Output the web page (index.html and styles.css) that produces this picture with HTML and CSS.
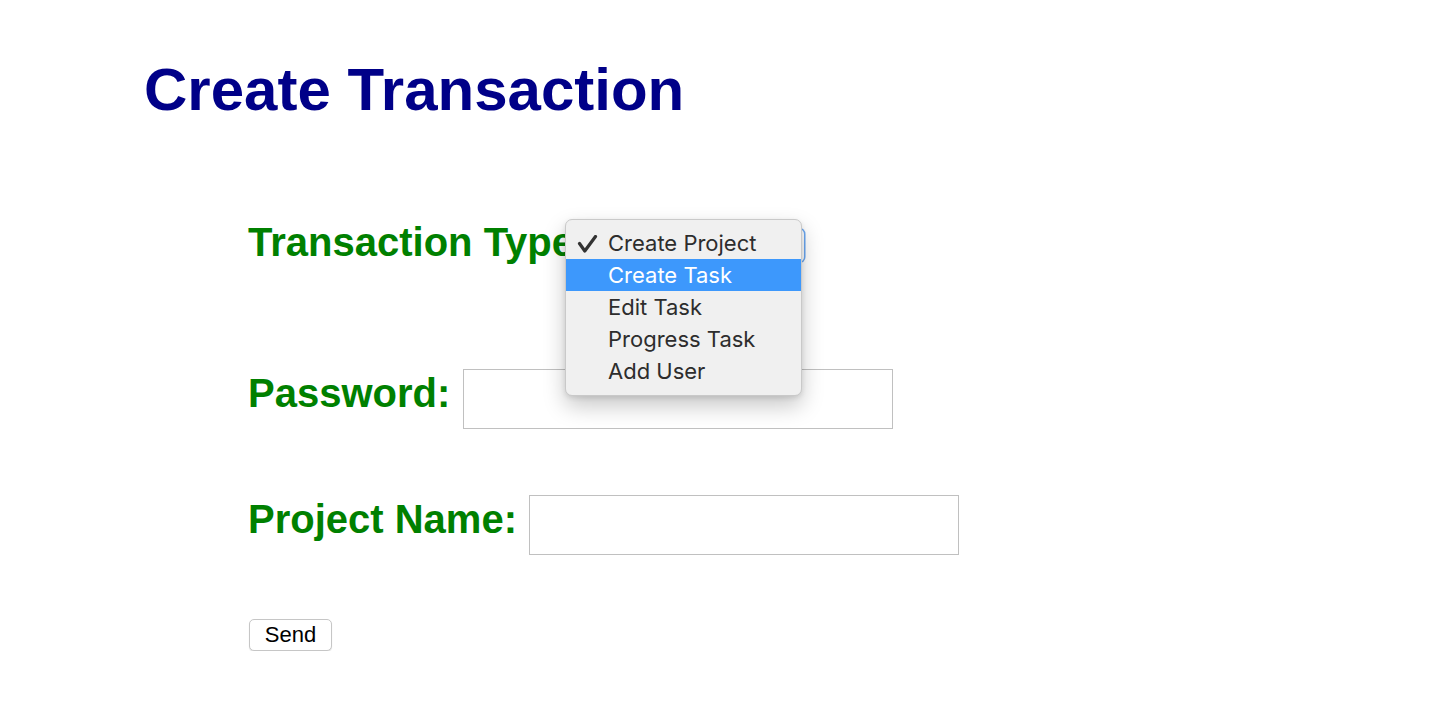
FILE: index.html
```html
<!DOCTYPE html>
<html lang="en">
<head>
<meta charset="utf-8">
<title>Create Transaction</title>
<link rel="stylesheet" href="styles.css">
</head>
<body>
<main class="page">
  <h1 class="title">Create Transaction</h1>
  <form class="form">
    <div class="row row-type">
      <label class="label">Transaction Type:</label>
      <div class="select-wrap">
        <div class="select"></div>
        <ul class="menu">
          <li class="menu-item is-checked">
            <svg class="check" width="24" height="24" viewBox="0 0 24 24"><path d="M3.5 8.5 L8.8 16 L19.5 1.5" fill="none" stroke="#333" stroke-width="3.2" stroke-linecap="round" stroke-linejoin="round"/></svg>
            Create Project
          </li>
          <li class="menu-item is-active">Create Task</li>
          <li class="menu-item">Edit Task</li>
          <li class="menu-item">Progress Task</li>
          <li class="menu-item">Add User</li>
        </ul>
      </div>
    </div>
    <div class="row row-pass">
      <label class="label">Password:</label>
      <input class="field" type="password">
    </div>
    <div class="row row-name">
      <label class="label">Project Name:</label>
      <input class="field" type="text">
    </div>
    <button class="send" type="button">Send</button>
  </form>
</main>
</body>
</html>
```
FILE: styles.css
```css
html, body {
  margin: 0;
  padding: 0;
  background: #fff;
}

.page {
  padding: 60px 0 0 144px;
  font-family: "Liberation Sans", Arial, sans-serif;
}

.title {
  margin: 0;
  font-size: 60px;
  line-height: 60px;
  font-weight: bold;
  color: #000088;
}

.form {
  margin: 102px 0 0 104px;
  display: flex;
  flex-direction: column;
  align-items: flex-start;
}

.row {
  display: flex;
  align-items: flex-start;
}

.label {
  flex: none;
  font-size: 40px;
  line-height: 40px;
  font-weight: bold;
  color: #008000;
  white-space: nowrap;
}

.row-type {
  width: 556px;
}

.row-pass,
.row-name {
  height: 60px;
}

.row-pass .label,
.row-name .label {
  margin-top: 4px;
}

.row-pass {
  margin-top: 107px;
}

.row-name {
  margin-top: 66px;
}

.field {
  box-sizing: border-box;
  width: 430px;
  height: 60px;
  margin: 0;
  border: 1px solid #c0c0c0;
  border-radius: 0;
  padding: 0 6px;
  background: #fff;
  font-size: 20px;
  outline: none;
}

.row-pass .field {
  margin-left: 13px;
}

.row-name .field {
  margin-left: 12px;
}

.select-wrap {
  position: relative;
  margin: 7px 0 0 auto;
  width: 200px;
  height: 33px;
}

.select {
  box-sizing: border-box;
  width: 100%;
  height: 100%;
  border-radius: 5px;
  background: #fff;
  box-shadow: 0 0 0 1.5px #6aa8f3;
}

.menu {
  position: absolute;
  left: -39px;
  top: -10px;
  width: 237px;
  margin: 0;
  padding: 7px 0 8px;
  list-style: none;
  box-sizing: border-box;
  background: #f0f0f0;
  border: 1px solid #c9c9c9;
  border-radius: 7px;
  box-shadow: 0 10px 22px rgba(0, 0, 0, 0.22), 0 2px 5px rgba(0, 0, 0, 0.1);
  font-family: "Inter", "Noto Sans", sans-serif;
  font-size: 22px;
  color: #2d2d2d;
}

.menu-item {
  position: relative;
  height: 32px;
  line-height: 32px;
  padding-left: 42px;
  white-space: nowrap;
}

.menu-item.is-active {
  background: #3d98fc;
  color: #fff;
}

.check {
  position: absolute;
  left: 10px;
  top: 8px;
}

.send {
  margin: 64px 0 0 1px;
  box-sizing: border-box;
  width: 83px;
  height: 32px;
  padding: 0;
  background: #fff;
  border: 1px solid #c6c6c6;
  border-radius: 5px;
  box-shadow: 0 1px 1px rgba(0, 0, 0, 0.12);
  font-family: "Liberation Sans", Arial, sans-serif;
  font-size: 22px;
  color: #000;
}
```
